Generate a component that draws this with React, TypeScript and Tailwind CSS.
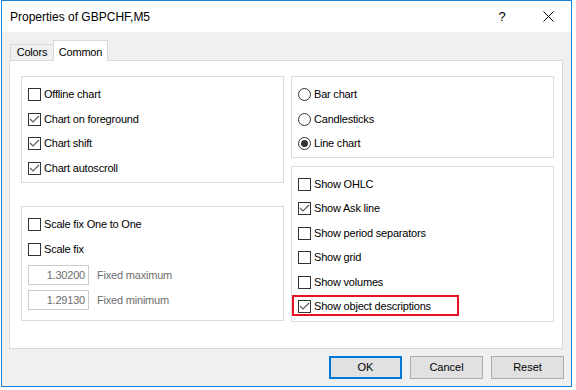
import React from "react";

type RowProps = { label: string; checked?: boolean };

const CheckBox = ({ checked }: { checked?: boolean }) => (
  <span className="w-[13px] h-[13px] border border-[#333333] bg-white flex items-center justify-center shrink-0">
    {checked && (
      <svg width="11" height="11" viewBox="0 0 11 11">
        <polyline points="1,5 4,8 10,2" fill="none" stroke="#5f5f5f" strokeWidth="1.2" />
      </svg>
    )}
  </span>
);

const Radio = ({ checked }: { checked?: boolean }) => (
  <span className="w-[13px] h-[13px] rounded-full border border-[#333333] bg-white flex items-center justify-center shrink-0">
    {checked && <span className="w-[7px] h-[7px] rounded-full bg-[#333333]" />}
  </span>
);

const Label = ({ children }: { children: React.ReactNode }) => (
  <span className="ml-[3px] text-[11px] leading-[13px] tracking-[-0.2px] text-black whitespace-nowrap">
    {children}
  </span>
);

const CheckRow: React.FC<RowProps> = ({ label, checked }) => (
  <div className="flex items-center h-[13px]">
    <CheckBox checked={checked} />
    <Label>{label}</Label>
  </div>
);

const RadioRow: React.FC<RowProps> = ({ label, checked }) => (
  <div className="flex items-center h-[13px]">
    <Radio checked={checked} />
    <Label>{label}</Label>
  </div>
);

const FixedRow = ({ value, label }: { value: string; label: string }) => (
  <div className="flex items-center h-[20px]">
    <div className="w-[61px] h-[20px] border border-[#cccccc] bg-white flex items-center justify-end pr-[3px] text-[11px] tracking-[-0.2px] text-[#6d6d6d]">
      {value}
    </div>
    <span className="ml-[8px] text-[11px] tracking-[-0.2px] text-[#6d6d6d] whitespace-nowrap">{label}</span>
  </div>
);

const Button = ({ label, primary }: { label: string; primary?: boolean }) => (
  <button
    className={
      primary
        ? "w-[73px] h-[23px] bg-[#e1e1e1] border-2 border-[#0078d7] text-[11px] text-black flex items-center justify-center"
        : "w-[73px] h-[23px] bg-[#e1e1e1] border border-[#adadad] text-[11px] text-black flex items-center justify-center"
    }
  >
    {label}
  </button>
);

export default function App() {
  return (
    <div className="w-[576px] h-[390px] bg-white font-['Liberation_Sans',Arial,sans-serif]">
      <div className="ml-[1px] w-[571px] h-[387px] border border-[#1883d7] bg-[#f0f0f0] flex flex-col">
        {/* title bar */}
        <div className="h-[31px] bg-white flex items-center shrink-0">
          <span className="pl-[8px] text-[12px] text-black flex-1">Properties of GBPCHF,M5</span>
          <div className="w-[46px] h-full flex items-center justify-center text-[13px] text-black">?</div>
          <div className="w-[46px] h-full flex items-center justify-center">
            <svg width="11" height="11" viewBox="0 0 11 11">
              <path d="M0.5 0.5 L10.5 10.5 M10.5 0.5 L0.5 10.5" stroke="#000" strokeWidth="1" />
            </svg>
          </div>
        </div>

        <div className="flex-1 pt-[8px] pl-[7px] pr-[8px] pb-[7px] flex flex-col">
          {/* tabs */}
          <div className="h-[20px] flex items-end pl-[1px]">
            <div className="w-[44px] h-[16px] border border-b-0 border-[#d9d9d9] bg-[#f0f0f0] flex items-center justify-center text-[11px] tracking-[-0.2px] text-black">
              Colors
            </div>
            <div className="relative z-10 -ml-[1px] -mb-[1px] w-[55px] h-[21px] border border-b-0 border-[#d9d9d9] bg-white flex items-start justify-center pt-[3px] text-[11px] tracking-[-0.2px] text-black">
              Common
            </div>
          </div>

          {/* page */}
          <div className="h-[289px] border border-[#d9d9d9] bg-white pt-[15px] pl-[11px] flex gap-[7px]">
            <div className="w-[263px] flex flex-col">
              <div className="h-[107px] border border-[#dcdcdc] pt-[11px] pl-[6px] flex flex-col gap-[11.67px]">
                <CheckRow label="Offline chart" />
                <CheckRow label="Chart on foreground" checked />
                <CheckRow label="Chart shift" checked />
                <CheckRow label="Chart autoscroll" checked />
              </div>
              <div className="mt-[23px] h-[115px] border border-[#dcdcdc] pt-[11px] pl-[6px] flex flex-col">
                <CheckRow label="Scale fix One to One" />
                <div className="mt-[12px]">
                  <CheckRow label="Scale fix" />
                </div>
                <div className="mt-[9px]">
                  <FixedRow value="1.30200" label="Fixed maximum" />
                </div>
                <div className="mt-[5px]">
                  <FixedRow value="1.29130" label="Fixed minimum" />
                </div>
              </div>
            </div>

            <div className="w-[263px] flex flex-col">
              <div className="h-[82px] border border-[#dcdcdc] pt-[11px] pl-[6px] flex flex-col gap-[11.5px]">
                <RadioRow label="Bar chart" />
                <RadioRow label="Candlesticks" />
                <RadioRow label="Line chart" checked />
              </div>
              <div className="mt-[8px] h-[156px] border border-[#dcdcdc] pt-[11px] pl-[6px] flex flex-col gap-[11.4px]">
                <CheckRow label="Show OHLC" />
                <CheckRow label="Show Ask line" checked />
                <CheckRow label="Show period separators" />
                <CheckRow label="Show grid" />
                <CheckRow label="Show volumes" />
                <div className="relative">
                  <CheckRow label="Show object descriptions" checked />
                  <span className="absolute -left-[6px] -top-[5px] w-[167px] h-[21px] border-2 border-[#e81123]" />
                </div>
              </div>
            </div>
          </div>

          {/* buttons */}
          <div className="mt-[7px] -mr-[1px] flex justify-end gap-[8px]">
            <Button label="OK" primary />
            <Button label="Cancel" />
            <Button label="Reset" />
          </div>
        </div>
      </div>
    </div>
  );
}
